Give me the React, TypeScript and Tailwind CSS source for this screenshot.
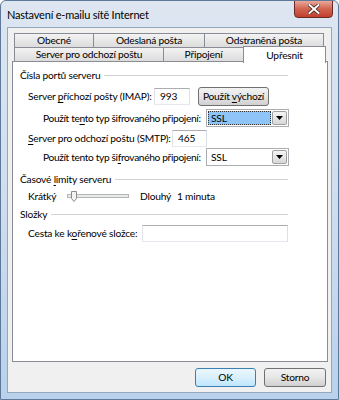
import React from "react"

const font = { fontFamily: 'Lato, "Liberation Sans", sans-serif' }

function U({ children }: { children: React.ReactNode }) {
  return <span className="underline underline-offset-2">{children}</span>
}

function Tab({ w, label, selected }: { w: number; label: string; selected?: boolean }) {
  return (
    <div
      className={
        selected
          ? "relative z-10 -mt-[2px] -mb-px h-[17px] border border-b-0 border-[#898c95] bg-white flex items-center justify-center whitespace-nowrap"
          : "h-[15px] border border-[#898c95] bg-gradient-to-b from-[#f3f3f3] to-[#dcdcdc] flex items-center justify-center whitespace-nowrap"
      }
      style={{ width: w }}
    >
      {label}
    </div>
  )
}

function GroupHead({ children, mt }: { children: React.ReactNode; mt: string }) {
  return (
    <div className={`flex items-center h-[16px] ${mt}`}>
      <span className="pr-[4px] whitespace-nowrap">{children}</span>
      <div className="flex-1 h-px bg-[#d0d4d8] mr-[39px]" />
    </div>
  )
}

function Select({ focused }: { focused?: boolean }) {
  return (
    <div className="ml-auto mr-[38px] w-[83px] h-[18px] border border-[#abadb3] bg-white flex items-stretch p-px shrink-0">
      <div
        className={
          focused
            ? "flex-1 bg-[#8ec4f8] border border-dotted border-[#333] px-[2px] flex items-center leading-none"
            : "flex-1 px-[3px] flex items-center leading-none"
        }
      >
        SSL
      </div>
      <div className="w-[15px] ml-px border border-[#a0a0a0] rounded-[2px] bg-gradient-to-b from-[#f4f4f4] to-[#d8d8d8] flex items-center justify-center">
        <svg width="7" height="4" viewBox="0 0 7 4">
          <path d="M0 0h7L3.5 4z" fill="#000" />
        </svg>
      </div>
    </div>
  )
}

function TextBox({ w, value }: { w: number; value?: string }) {
  return (
    <div
      className="h-[17px] shrink-0 border border-[#abadb3] border-l-[#e2e3ea] border-r-[#dbdfe6] border-b-[#e3e9ef] bg-white flex items-center px-[5px] leading-none"
      style={{ width: w }}
    >
      {value}
    </div>
  )
}

export default function App() {
  return (
    <div
      className="w-[339px] h-[400px] relative bg-gradient-to-b from-[#dde6f1] via-[#cfdeef] to-[#b9d1eb] border border-[#5d7898] rounded-t-[6px] flex flex-col text-[10.2px] tracking-[-0.2px] text-black overflow-hidden"
      style={font}
    >
      {/* title bar */}
      <div className="h-[26px] flex items-center pl-[6px] text-[11px] leading-none shrink-0">
        Nastavení e-mailu sítě Internet
      </div>
      <div className="absolute top-[-1px] right-[5px] w-[39px] h-[18px] rounded-b-[4px] border border-[#6b2a23] bg-gradient-to-b from-[#e9a99c] via-[#d0634f] to-[#c1402e] flex items-center justify-center">
        <svg width="12" height="10" viewBox="0 0 12 10">
          <path d="M1.5 1l9 8M10.5 1l-9 8" stroke="#4a2020" strokeWidth="3.6" strokeLinecap="square" />
          <path d="M1.5 1l9 8M10.5 1l-9 8" stroke="#fff" strokeWidth="2" strokeLinecap="square" />
        </svg>
      </div>

      {/* client */}
      <div className="flex-1 mx-[6px] mb-[6px] border border-[#95a7bd] bg-[#f0f0f0] flex flex-col px-[4px] pt-[5px]">
        {/* tabs */}
        <div className="pl-[2px] flex flex-col leading-none">
          <div className="flex">
            <Tab w={80} label="Obecné" />
            <div className="-ml-px"><Tab w={112} label="Odeslaná pošta" /></div>
            <div className="-ml-px"><Tab w={120} label="Odstraněná pošta" /></div>
          </div>
          <div className="flex items-end -mt-px">
            <Tab w={150} label="Server pro odchozí poštu" />
            <div className="-ml-px"><Tab w={81} label="Připojení" /></div>
            <div className="-ml-px"><Tab w={83} label="Upřesnit" selected /></div>
          </div>
        </div>

        {/* panel */}
        <div className="h-[301px] w-[316px] -mt-px border border-[#898c95] bg-white pl-[7px] pt-[5px] flex flex-col leading-none whitespace-nowrap">
          <GroupHead mt="mt-0">Čísla portů serveru</GroupHead>

          <div className="flex items-center h-[18px] mt-[4px] pl-[8px]">
            <span className="w-[126px] shrink-0">Server <U>p</U>říchozí pošty (IMAP):</span>
            <TextBox w={36} value="993" />
            <div className="ml-[8px] w-[71px] h-[19px] shrink-0 border border-[#707070] rounded-[3px] bg-gradient-to-b from-[#f2f2f2] via-[#e6e6e6] to-[#d0d0d0] flex items-center justify-center">
              <span>Použít <U>v</U>ýchozí</span>
            </div>
          </div>

          <div className="flex items-center h-[18px] mt-[4px] pl-[23px]">
            <span className="tracking-[-0.35px]">Použít te<U>n</U>to typ šifrovaného připojení:</span>
            <Select focused />
          </div>

          <div className="flex items-center h-[18px] mt-[2px] pl-[8px]">
            <span className="w-[144px] shrink-0"><U>S</U>erver pro odchozí poštu (SMTP):</span>
            <TextBox w={35} value="465" />
          </div>

          <div className="flex items-center h-[18px] mt-[1px] pl-[23px]">
            <span className="tracking-[-0.35px]">Použít tento typ ši<U>f</U>rovaného připojení:</span>
            <Select />
          </div>

          <GroupHead mt="mt-[5px]">Časové <U>l</U>imity serveru</GroupHead>

          <div className="flex items-center h-[16px] mt-[1px] pl-[8px]">
            <span className="w-[39px] shrink-0">Krátký</span>
            <svg width="62" height="14" viewBox="0 0 62 14" className="shrink-0">
              <rect x="0.5" y="5.5" width="61" height="3" fill="#e7eaea" stroke="#b6b6b6" />
              <path d="M4.5 2.5h5v7l-2.5 3l-2.5-3z" fill="#f2f2f2" stroke="#8a8a8a" />
            </svg>
            <span className="ml-[11px] w-[37px] shrink-0">Dlouhý</span>
            <span>1 minuta</span>
          </div>

          <GroupHead mt="mt-[2px]">Složky</GroupHead>

          <div className="flex items-center h-[17px] mt-[3px] pl-[8px]">
            <span className="w-[114px] shrink-0">Cesta ke k<U>o</U>řenové složce:</span>
            <TextBox w={146} />
          </div>
        </div>

        {/* buttons */}
        <div className="flex justify-end gap-[8px] mt-[6px] mr-[1px]">
          <div className="w-[61px] h-[19px] border border-[#3c7fb1] rounded-[3px] bg-gradient-to-b from-[#eaf6fd] via-[#d9f0fc] to-[#bee6fd] flex items-center justify-center leading-none">
            OK
          </div>
          <div className="w-[62px] h-[19px] border border-[#707070] rounded-[3px] bg-gradient-to-b from-[#f2f2f2] via-[#e6e6e6] to-[#d0d0d0] flex items-center justify-center leading-none">
            Storno
          </div>
        </div>
      </div>
    </div>
  )
}
